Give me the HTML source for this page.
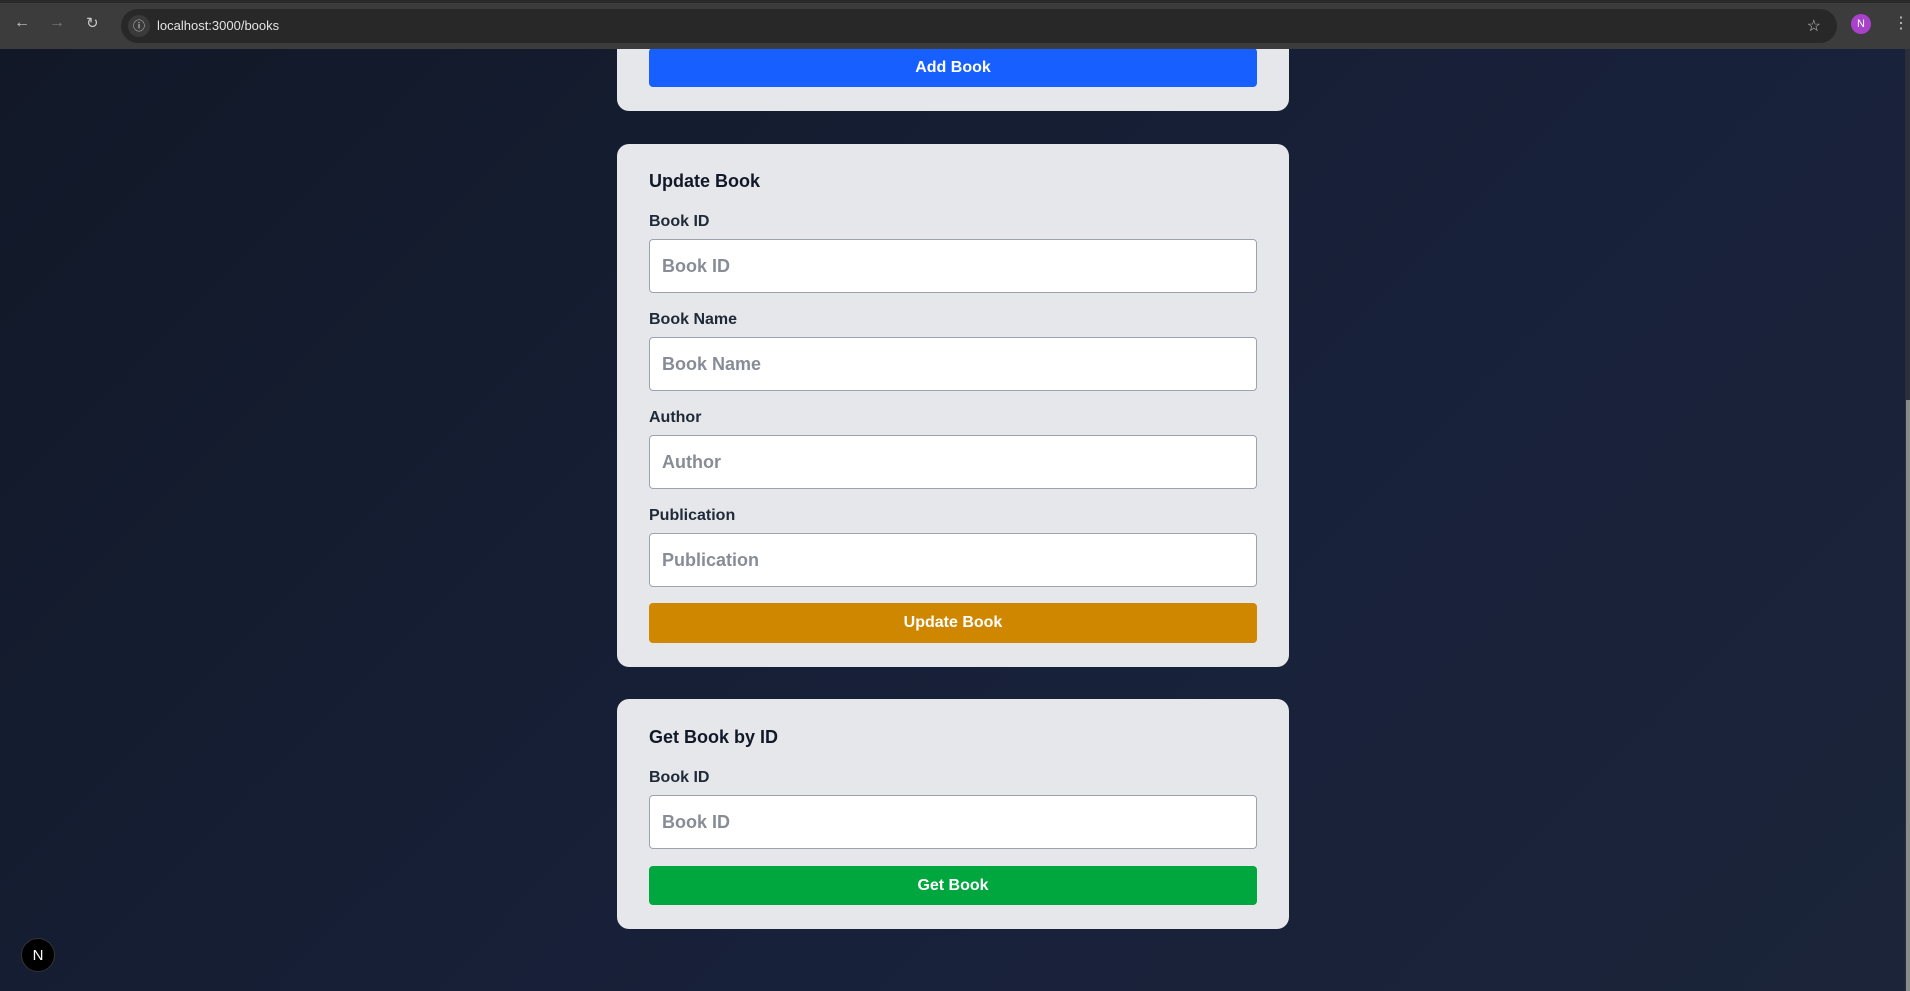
<!DOCTYPE html>
<html><head><meta charset="utf-8"><style>
*{box-sizing:border-box;margin:0;padding:0}
body{width:1910px;height:991px;overflow:hidden;font-family:"Liberation Sans",Arial,sans-serif;background:linear-gradient(135deg,#111827 0%,#18213a 60%,#1b2438 100%);position:relative}
.bar{position:absolute;left:0;top:0;width:1910px;height:49px;background:#3c3c3c;border-top:3px solid #2a2a2a}
.url{position:absolute;left:121px;top:6px;width:1716px;height:34px;border-radius:17px;background:#282828}
.url .t{position:absolute;left:36px;top:9px;color:#e3e3e3;font-size:13px}
.ic{position:absolute;color:#c8c8c8;font-size:16px}
.card{position:absolute;left:617px;width:672px;background:#e5e7eb;border-radius:12px}
.btn{position:absolute;left:32px;width:608px;border-radius:4px;color:#fff;font-weight:bold;font-size:16px;display:flex;align-items:center;justify-content:center}
.h{position:absolute;left:32px;font-size:18px;font-weight:bold;color:#111827}
.lb{position:absolute;left:32px;font-size:16px;font-weight:bold;color:#1f2937}
.in{position:absolute;left:32px;width:608px;height:54px;background:#fff;border:1px solid #9ca3af;border-radius:4px;color:#878c96;font-size:18px;font-weight:bold;padding:0 12px;display:flex;align-items:center}
</style></head><body>
<div class="card" style="top:20px;height:91px"><div class="btn" style="top:28px;height:39px;background:#1760ff">Add Book</div></div>
<div class="card" style="top:144px;height:523px">
<div class="h" style="top:27px">Update Book</div>
<div class="lb" style="top:69px">Book ID</div><div class="in" style="top:95px">Book ID</div>
<div class="lb" style="top:167px">Book Name</div><div class="in" style="top:193px">Book Name</div>
<div class="lb" style="top:265px">Author</div><div class="in" style="top:291px">Author</div>
<div class="lb" style="top:363px">Publication</div><div class="in" style="top:389px">Publication</div>
<div class="btn" style="top:459px;height:40px;background:#cf8700">Update Book</div>
</div>
<div class="card" style="top:699px;height:230px">
<div class="h" style="top:28px">Get Book by ID</div>
<div class="lb" style="top:70px">Book ID</div><div class="in" style="top:96px">Book ID</div>
<div class="btn" style="top:167px;height:39px;background:#00a63e">Get Book</div>
</div>
<div style="position:absolute;left:21px;top:938px;width:34px;height:34px;border-radius:50%;background:#000;border:1px solid #333;color:#fff;font-size:15px;display:flex;align-items:center;justify-content:center">N</div>
<div style="position:absolute;left:1905px;top:49px;width:5px;height:942px;background:#2a2f3a"></div>
<div style="position:absolute;left:1906px;top:400px;width:4px;height:591px;background:#8a8a8a"></div>
<div class="bar">
<div class="ic" style="left:14px;top:11px">&#8592;</div>
<div class="ic" style="left:49px;top:11px;color:#777">&#8594;</div>
<div class="ic" style="left:86px;top:11px;font-size:15px">&#8635;</div>
<div class="url"><div style="position:absolute;left:7px;top:6px;width:22px;height:22px;border-radius:50%;background:#3a3a3a;color:#ddd;font-size:12px;text-align:center;line-height:22px">&#9432;</div><div class="t">localhost:3000/books</div>
<div class="ic" style="right:16px;left:auto;top:7px">&#9734;</div></div>
<div style="position:absolute;left:1851px;top:11px;width:20px;height:20px;border-radius:50%;background:#a742c9;color:#fff;font-size:11px;text-align:center;line-height:20px">N</div>
<div class="ic" style="left:1893px;top:10px;font-size:16px">&#8942;</div>
</div>
</body></html>
